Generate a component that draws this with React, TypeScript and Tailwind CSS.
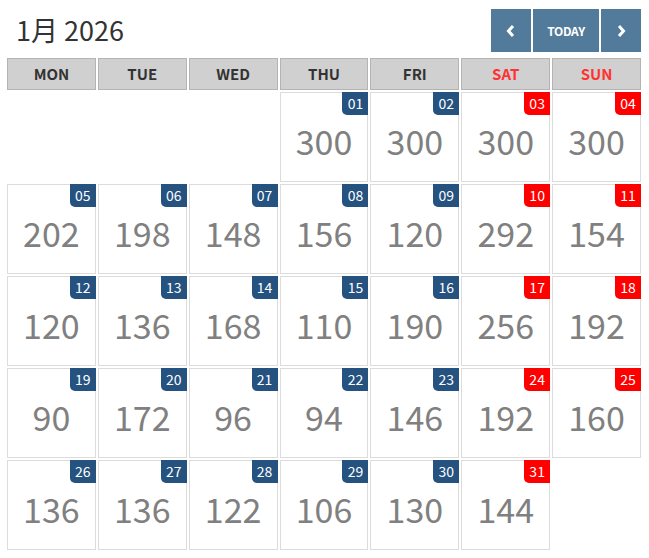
import React from "react";

const days = ["MON", "TUE", "WED", "THU", "FRI", "SAT", "SUN"];

// null = empty cell
const weeks: (null | [string, number])[][] = [
  [null, null, null, ["01", 300], ["02", 300], ["03", 300], ["04", 300]],
  [["05", 202], ["06", 198], ["07", 148], ["08", 156], ["09", 120], ["10", 292], ["11", 154]],
  [["12", 120], ["13", 136], ["14", 168], ["15", 110], ["16", 190], ["17", 256], ["18", 192]],
  [["19", 90], ["20", 172], ["21", 96], ["22", 94], ["23", 146], ["24", 192], ["25", 160]],
  [["26", 136], ["27", 136], ["28", 122], ["29", 106], ["30", 130], ["31", 144], null],
];

const App = () => {
  return (
    <div
      className="w-[649px] h-[558px] bg-white pl-[7px] pt-[9px]"
      style={{ fontFamily: '"Noto Sans CJK JP", "Noto Sans", sans-serif' }}
    >
      <div className="w-[634px] flex items-center justify-between h-[43px]">
        <h1 className="ml-[9px] text-[27px] text-[#333] leading-none -mt-[2px]">1月 2026</h1>
        <div className="flex gap-[2px] h-[43px]">
          <button className="w-[40px] bg-[#527a9b] flex items-center justify-center text-white">
            <svg width="12" height="14" viewBox="0 0 12 14">
              <path d="M8 2 L3.5 7 L8 12" fill="none" stroke="white" strokeWidth="3" />
            </svg>
          </button>
          <button className="w-[66px] bg-[#527a9b] flex items-center justify-center text-white text-[12px] font-bold tracking-tight">
            TODAY
          </button>
          <button className="w-[40px] bg-[#527a9b] flex items-center justify-center text-white">
            <svg width="12" height="14" viewBox="0 0 12 14">
              <path d="M4 2 L8.5 7 L4 12" fill="none" stroke="white" strokeWidth="3" />
            </svg>
          </button>
        </div>
      </div>

      <div className="w-[634px] grid grid-cols-7 gap-[2px] mt-[6px]">
        {days.map((d, i) => (
          <div
            key={d}
            className={`h-[32px] bg-[#d0d0d0] border border-[#b4b4b4] flex items-center justify-center text-[15px] font-bold ${
              i >= 5 ? "text-[#ff3333]" : "text-[#333]"
            }`}
          >
            {d}
          </div>
        ))}
        {weeks.flatMap((w, wi) =>
          w.map((c, ci) =>
            c === null ? (
              <div key={`${wi}-${ci}`} className="h-[90px]" />
            ) : (
              <div
                key={`${wi}-${ci}`}
                className="h-[90px] border border-[#dcdcdc] relative flex items-center justify-center"
              >
                <span
                  className={`absolute top-[-1px] right-[-1px] w-[26px] h-[23px] rounded-bl-[5px] text-white text-[14px] flex items-center justify-center ${
                    ci >= 5 ? "bg-[#ff0000]" : "bg-[#25527f]"
                  }`}
                >
                  {c[0]}
                </span>
                <span className="text-[34px] text-[#808080] leading-none mt-[8px]">{c[1]}</span>
              </div>
            )
          )
        )}
      </div>
    </div>
  );
};

export default App;
